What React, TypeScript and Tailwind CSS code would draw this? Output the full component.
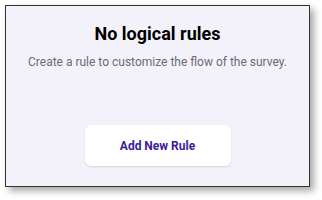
import React from 'react';

export default function App() {
  return (
    <div className="w-[322px] h-[200px] bg-white p-[5px] font-['Roboto',sans-serif]">
      {/* Empty state card */}
      <div className="w-[305px] h-[182px] bg-[#f3f2fb] border-[1.5px] border-[#333333] shadow-[4px_4px_7px_rgba(0,0,0,0.35)] flex flex-col items-center">
        <h1 className="mt-[16px] text-[18px] font-bold text-black leading-[24px]">No logical rules</h1>
        <p className="mt-[7px] text-[12px] text-[#6b6b74] leading-[18px]">
          Create a rule to customize the flow of the survey.
        </p>
        <button className="mt-[54px] w-[146px] h-[41px] rounded-[6px] bg-white shadow-[0_1px_2px_rgba(0,0,0,0.12)] text-[12px] font-bold text-[#3a1a9e]">
          Add New Rule
        </button>
      </div>
    </div>
  );
}
